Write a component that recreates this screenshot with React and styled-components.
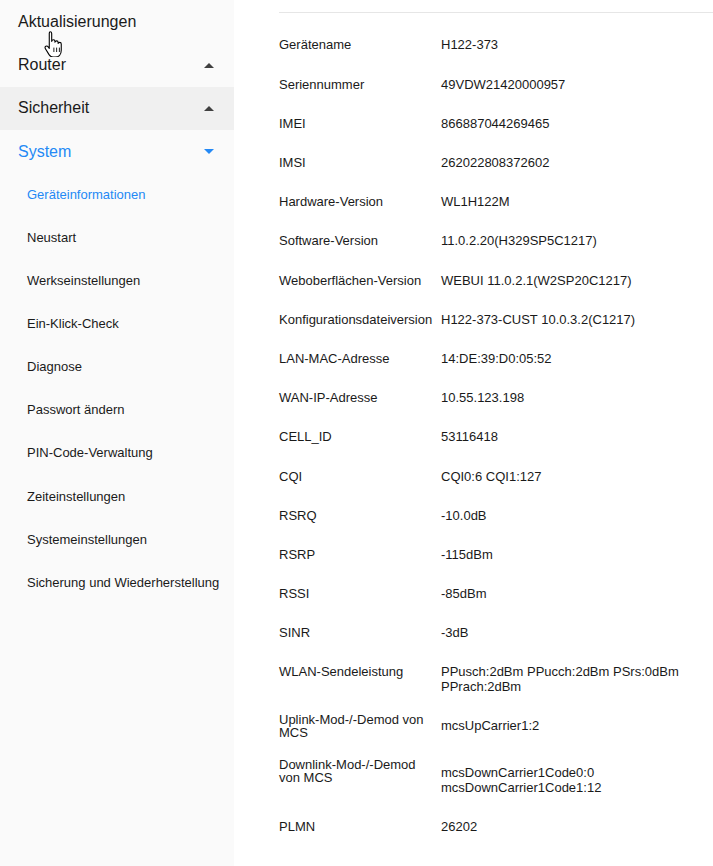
import React from 'react';
import styled, { createGlobalStyle } from 'styled-components';

const GlobalStyle = createGlobalStyle`
  html, body {
    margin: 0;
    padding: 0;
    background: #fff;
  }
  body {
    font-family: "Liberation Sans", Arial, sans-serif;
    color: #1a1a1a;
  }
`;

const Page = styled.div`
  display: flex;
  min-height: 866px;
`;

const Sidebar = styled.nav`
  position: relative;
  width: 234px;
  flex-shrink: 0;
  background: #fafafa;
`;

const MenuItem = styled.div`
  display: flex;
  align-items: center;
  justify-content: space-between;
  height: 43.4px;
  padding: 0 20px 0 18px;
  font-size: 16px;
  color: ${p => (p.active ? '#2489f5' : '#1a1a1a')};
  background: ${p => (p.hover ? '#f0f0f0' : 'transparent')};
`;

const Caret = styled.span`
  width: 0;
  height: 0;
  border-left: 5px solid transparent;
  border-right: 5px solid transparent;
  ${p =>
    p.down
      ? `border-top: 5px solid #2489f5;`
      : `border-bottom: 5px solid #404040;`}
`;

const SubList = styled.div`
  margin-top: -1px;
`;

const SubItem = styled.div`
  display: flex;
  align-items: center;
  height: 43.15px;
  padding-left: 27px;
  font-size: 13px;
  color: ${p => (p.active ? '#2489f5' : '#1a1a1a')};
`;

const Cursor = styled.svg`
  position: absolute;
  left: 44px;
  top: 30px;
`;

const Main = styled.main`
  flex: 1;
  padding: 12px 0 0 45px;
  font-size: 13px;
`;

const Divider = styled.div`
  border-top: 1px solid #e6e6e6;
  margin-bottom: 12.4px;
`;

const Row = styled.div`
  display: grid;
  grid-template-columns: 162px 1fr;
  align-items: ${p => p.align || 'center'};
  padding: ${p => p.pad || '12.1px 0'};
  line-height: 15px;
`;

const Label = styled.div`
  line-height: ${p => (p.tight ? '13px' : '15px')};
  padding-right: 8px;
`;

const Value = styled.div`
  line-height: 15px;
  margin-top: ${p => p.offset || 0}px;
`;

const subItems = [
  'Geräteinformationen',
  'Neustart',
  'Werkseinstellungen',
  'Ein-Klick-Check',
  'Diagnose',
  'Passwort ändern',
  'PIN-Code-Verwaltung',
  'Zeiteinstellungen',
  'Systemeinstellungen',
  'Sicherung und Wiederherstellung',
];

const info = [
  ['Gerätename', 'H122-373'],
  ['Seriennummer', '49VDW21420000957'],
  ['IMEI', '866887044269465'],
  ['IMSI', '262022808372602'],
  ['Hardware-Version', 'WL1H122M'],
  ['Software-Version', '11.0.2.20(H329SP5C1217)'],
  ['Weboberflächen-Version', 'WEBUI 11.0.2.1(W2SP20C1217)'],
  ['Konfigurationsdateiversion', 'H122-373-CUST 10.0.3.2(C1217)'],
  ['LAN-MAC-Adresse', '14:DE:39:D0:05:52'],
  ['WAN-IP-Adresse', '10.55.123.198'],
  ['CELL_ID', '53116418'],
  ['CQI', 'CQI0:6 CQI1:127'],
  ['RSRQ', '-10.0dB'],
  ['RSRP', '-115dBm'],
  ['RSSI', '-85dBm'],
  ['SINR', '-3dB'],
];

const HandCursor = () => (
  <Cursor width="20" height="27" viewBox="0 0 18.2 24.5">
    <path
      d="M5.5 1.5c1 0 1.5.7 1.5 1.6v7.2c.2-1 .8-1.4 1.6-1.4.9 0 1.4.7 1.4 1.6v.6c.2-.8.8-1.2 1.5-1.2.9 0 1.4.7 1.4 1.6v.7c.2-.7.8-1 1.4-1 .9 0 1.4.7 1.4 1.6v5.5c0 3.5-2 6.3-5.6 6.3H8.2c-1.6 0-2.6-.8-3.6-2.2L1.3 17c-.6-1-.4-1.9.4-2.3.8-.4 1.6 0 2.3.9l.8 1.1V3.1c0-.9.5-1.6.7-1.6z"
      fill="#fff"
      stroke="#000"
      strokeWidth="1"
      strokeLinejoin="round"
    />
    <path d="M9 16v4M11.5 16v4M14 16v4" stroke="#000" strokeWidth="0.8" />
  </Cursor>
);

const App = () => (
  <>
    <GlobalStyle />
    <Page>
      <Sidebar>
        <MenuItem>Aktualisierungen</MenuItem>
        <MenuItem>
          Router
          <Caret />
        </MenuItem>
        <MenuItem hover>
          Sicherheit
          <Caret />
        </MenuItem>
        <MenuItem active>
          System
          <Caret down />
        </MenuItem>
        <SubList>
          {subItems.map((s, i) => (
            <SubItem key={s} active={i === 0}>
              {s}
            </SubItem>
          ))}
        </SubList>
        <HandCursor />
      </Sidebar>
      <Main>
        <Divider />
        {info.map(([k, v]) => (
          <Row key={k}>
            <Label>{k}</Label>
            <Value>{v}</Value>
          </Row>
        ))}
        <Row align="start">
          <Label>WLAN-Sendeleistung</Label>
          <Value>PPusch:2dBm PPucch:2dBm PSrs:0dBm PPrach:2dBm</Value>
        </Row>
        <Row pad="6px 0 12px">
          <Label tight>Uplink-Mod-/-Demod von MCS</Label>
          <Value>mcsUpCarrier1:2</Value>
        </Row>
        <Row align="start" pad="7px 0 12px">
          <Label tight>Downlink-Mod-/-Demod von MCS</Label>
          <Value offset={7}>
            mcsDownCarrier1Code0:0
            <br />
            mcsDownCarrier1Code1:12
          </Value>
        </Row>
        <Row>
          <Label>PLMN</Label>
          <Value>26202</Value>
        </Row>
      </Main>
    </Page>
  </>
);

export default App;
